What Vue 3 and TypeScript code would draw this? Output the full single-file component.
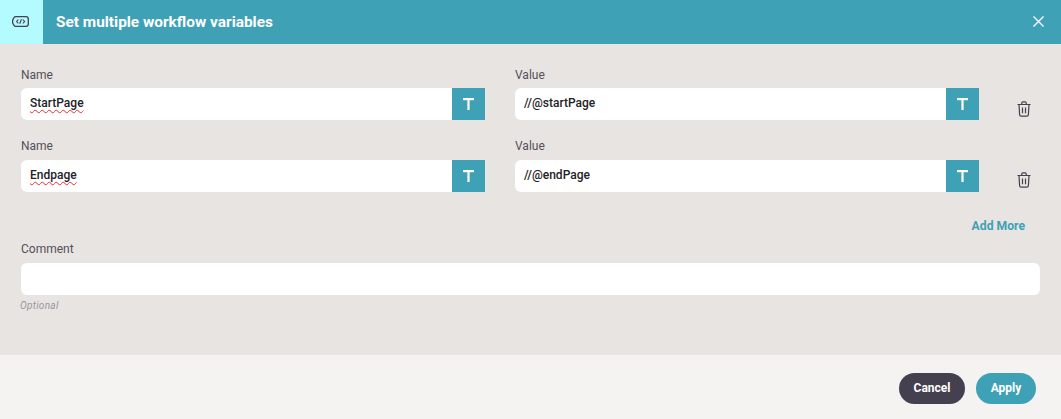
<script setup lang="ts">
interface Row { name: string; value: string }
const rows: Row[] = [
  { name: 'StartPage', value: '//@startPage' },
  { name: 'Endpage', value: '//@endPage' },
]
</script>

<template>
  <div class="dialog">
    <header class="head">
      <div class="badge">
        <svg width="17" height="11" viewBox="0 0 17 11" fill="none" stroke="#45404f">
          <path d="M3.8.7H14C15.4.7 16.3 1.6 16.3 3V8C16.3 9.4 15.4 10.3 14 10.3H3.8C3 10.3 2.5 10 2.1 9.5L1 7.6C.7 7 .6 6.2 .6 5.5C.6 4.8.7 4 1 3.4L2.1 1.5C2.5 1 3 .7 3.8.7Z" stroke-width="1.3" />
          <path d="M6.3 3.6L4.6 5.5L6.3 7.4M10.9 3.6L12.6 5.5L10.9 7.4M9.4 3.3L7.8 7.7" stroke-width="1.1" />
        </svg>
      </div>
      <h1 class="title">Set multiple workflow variables</h1>
      <button class="close" aria-label="Close">
        <svg width="11" height="11" viewBox="0 0 11 11" stroke="#fff" stroke-width="1.4" fill="none">
          <path d="M.5.5L10.5 10.5M10.5.5L.5 10.5" />
        </svg>
      </button>
    </header>

    <main class="body">
      <div v-for="row in rows" :key="row.name" class="row">
        <div class="field">
          <label class="label">Name</label>
          <div class="input">
            <span class="text"><span class="misspelt">{{ row.name }}</span></span>
            <span class="type">
              <svg width="11" height="12" viewBox="0 0 11 12" fill="#fff">
                <rect x="0" y="0" width="11" height="2.2" />
                <rect x="4.4" y="0" width="2.2" height="12" />
              </svg>
            </span>
          </div>
        </div>
        <div class="field">
          <label class="label">Value</label>
          <div class="input">
            <span class="text">{{ row.value }}</span>
            <span class="type">
              <svg width="11" height="12" viewBox="0 0 11 12" fill="#fff">
                <rect x="0" y="0" width="11" height="2.2" />
                <rect x="4.4" y="0" width="2.2" height="12" />
              </svg>
            </span>
          </div>
        </div>
        <button class="trash" aria-label="Delete">
          <svg width="14" height="16" viewBox="0 0 14 16" fill="none" stroke="#45404f" stroke-width="1.2">
            <path d="M.5 3.5H13.5M4.8 3.3V1.9C4.8 1.2 5.2.8 5.8.8H8.2C8.8.8 9.2 1.2 9.2 1.9V3.3" />
            <path d="M2 3.5L2.6 13.6C2.7 14.6 3.2 15.2 4.1 15.2H9.9C10.8 15.2 11.3 14.6 11.4 13.6L12 3.5" />
            <path d="M5.5 6.5V12.2M8.5 6.5V12.2" />
          </svg>
        </button>
      </div>

      <div class="more-line"><a class="more">Add More</a></div>

      <label class="label comment-label">Comment</label>
      <div class="input comment"></div>
      <div class="hint">Optional</div>
    </main>

    <footer class="foot">
      <button class="btn cancel">Cancel</button>
      <button class="btn apply">Apply</button>
    </footer>
  </div>
</template>

<style>
html, body { margin: 0; background: #f5f3f1; }
</style>

<style scoped>
.dialog {
  width: 1061px;
  height: 419px;
  display: flex;
  flex-direction: column;
  font-family: Roboto, "Liberation Sans", sans-serif;
  overflow: hidden;
}
.head {
  height: 44px;
  flex: none;
  display: flex;
  align-items: center;
  background: #3ea1b5;
}
.badge {
  width: 43px;
  height: 44px;
  background: #b3fbff;
  display: flex;
  align-items: center;
  justify-content: center;
  padding: 0 3px 1px 0;
  box-sizing: border-box;
}
.title {
  margin: 0 0 1px 13px;
  font-size: 15.4px;
  font-weight: 700;
  line-height: 20px;
  color: #fff;
  flex: 1;
}
.close {
  width: 11px;
  height: 11px;
  padding: 0;
  margin: 0 17px 1px 0;
  border: 0;
  background: none;
  display: flex;
}
.body {
  height: 311px;
  flex: none;
  box-sizing: border-box;
  background: #e8e4e1;
  padding: 23px 21px 0;
}
.row {
  display: flex;
  gap: 30px;
  margin-bottom: 8px;
  height: 64px;
}
.field { width: 464px; }
.row + .row .label { height: 22px; margin-top: -1px; }
.label {
  display: block;
  height: 21px;
  font-size: 12px;
  line-height: 16px;
  color: #55505c;
}
.input {
  height: 32px;
  background: #fff;
  border-radius: 6px 0 0 6px;
  display: flex;
  align-items: center;
}
.text {
  flex: 1;
  padding: 0 0 2px 9px;
  font-size: 12px;
  font-weight: 500;
  color: #222126;
}
.misspelt {
  text-decoration: underline wavy #ee2a33 1.2px;
  text-underline-offset: 2px;
}
.type {
  width: 33px;
  height: 32px;
  background: #3ea1b5;
  display: flex;
  align-items: center;
  justify-content: center;
  padding-bottom: 1px;
  box-sizing: border-box;
}
.type svg { display: block; }
.trash {
  border: 0;
  background: none;
  padding: 0;
  margin: 34px 0 0 8px;
  width: 14px;
  height: 16px;
  display: flex;
}
.row + .row .trash { margin-top: 33px; }
.more-line {
  display: flex;
  justify-content: flex-end;
  margin-top: 14px;
  height: 18px;
  margin-right: 15px;
}
.more {
  font-size: 12.2px;
  font-weight: 700;
  line-height: 18px;
  color: #3ea1b5;
}
.comment-label { margin-top: 6px; height: 22px; }
.comment { width: 1019px; border-radius: 6px; }
.hint {
  margin-top: 5px;
  margin-left: -1px;
  font-size: 10px;
  line-height: 12px;
  font-style: italic;
  letter-spacing: .3px;
  color: #9a959c;
}
.foot {
  flex: 1;
  background: #f5f3f1;
  display: flex;
  justify-content: flex-end;
  align-items: center;
  gap: 11px;
  padding: 2px 25px 0 0;
}
.btn {
  height: 31px;
  border: 0;
  border-radius: 16px;
  color: #fff;
  font-family: inherit;
  font-size: 12px;
  font-weight: 700;
  padding: 0;
}
.cancel { width: 66px; background: #45404f; }
.apply { width: 60px; background: #3ea1b5; }
</style>
